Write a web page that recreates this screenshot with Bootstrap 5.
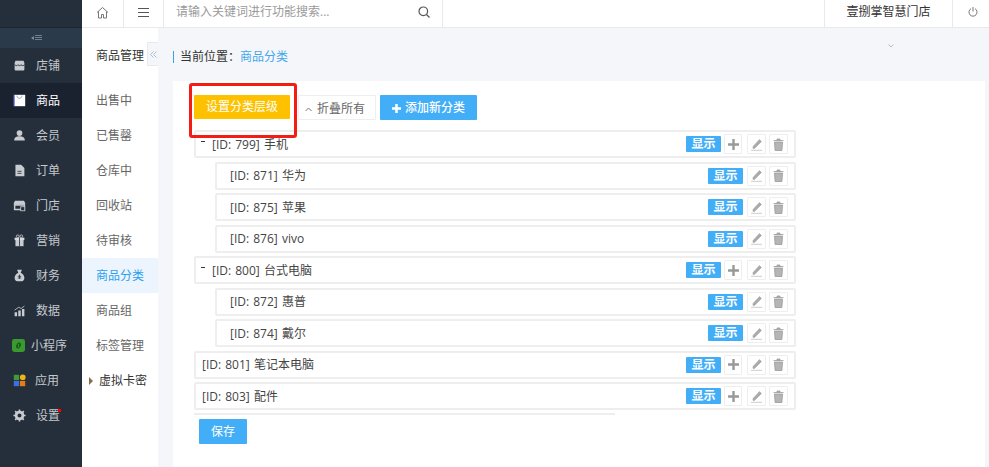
<!DOCTYPE html>
<html lang="zh">
<head>
<meta charset="utf-8">
<title>商品分类</title>
<link rel="stylesheet" href="https://cdn.jsdelivr.net/npm/bootstrap@5.3.0/dist/css/bootstrap.min.css">
<style>
html,body{height:467px;overflow:hidden}
body{font:12px/1.5 "Open Sans","Noto Sans CJK SC",sans-serif;color:#444;background:#f4f6f9}
.app{height:467px}
.fill{min-width:0;min-height:0}
.side{width:82px;background:#252f3b;color:#c2c6ca}
.side-top{height:28px;border-bottom:1px solid #1d2631}
.side-fold{height:20px;background:#2b3a4b;padding-right:9px}
.side-item{height:35px;padding-left:13px;gap:10px;color:#c4c8cc}
.side-item.now{background:#1a2230;color:#fff}
.side-item svg{width:13px;height:13px;flex:none}
.side-item.wide{padding-left:12px;gap:6px}
.side-item.apps{gap:9px}
.dot-red{width:3px;height:3px;background:#f00;margin:-10px 0 0 -12px}
.top{height:28px;background:#fff;border-bottom:1px solid #e8e9eb}
.cell{height:27px;border-right:1px solid #e8e9eb;color:#555;padding-bottom:3px}
.cell-home{width:42px}.cell-menu{width:40px}
.cell-search{width:279px;padding:0 12px 3px;color:#9a9a9a}
.cell-store{width:129px;border-left:1px solid #e8e9eb;color:#333}
.cell-power{width:36px;border-right:0;padding-left:4px}
.sub{width:76px;background:#fff}
.sub-title{height:55px;padding:14px 0 0 14px;color:#333;line-height:28px}
.sub-item{height:35px;padding-left:14px;color:#666}
.sub-item.now{background:#ecf5fe;color:#2d9ff0}
.sub-item.tree{padding-left:7px;gap:6px;color:#333}
.sub-item.tree span:last-child{padding-top:1px}
.tri{width:0;height:0;border-left:4px solid #8a6d4b;border-top:4px solid transparent;border-bottom:4px solid transparent}
.tab{width:11px;height:24px;top:14px;right:0;background:#f4f6f9;border:1px solid #e8e9eb;border-right:0}
.crumb{height:53px;padding:4px 0 0 15px;color:#333}
.crumb-text{border-left:1px solid #3a9fe6;padding-left:6px;line-height:12px}
.crumb-text a{color:#45a6ee;text-decoration:none}
.crumb-more{margin-right:95px;margin-top:10px;line-height:6px;align-self:flex-start}
.panel{background:#fff;margin:0 4px 0 15px;padding:14px 0 0 21px}
.tools{height:35px;gap:4px}
.b{height:25px;border-radius:1px;border:0;padding:0;font-size:12px;line-height:25px}
.b-set{width:96px;height:24px;line-height:24px;background:#fdc100;color:#fff}
.b-fold{width:78px;background:#fff;border:1px solid #eee;color:#666;margin-left:4px;padding-right:4px}
.b-fold svg{margin-right:5px}
.b-add{width:97px;background:#42aef8;color:#fff;font-weight:500}
.b-add svg{margin-right:4px}
.anno{position:relative;display:block}
.anno i{position:absolute;left:-5px;right:-7px;top:-12px;bottom:-8px;border:3px solid #f41c14;border-radius:3px}
.cat-list{width:602px;list-style:none;margin:0;padding:0}
.cat-list ol{list-style:none;margin:0;padding:0 0 0 21px}
.cat{height:28px;margin-bottom:3.5px;border:2px solid #eee;border-radius:2px;padding:0 6px;color:#444;background:#fff}
.nm{padding-top:1px;word-spacing:1px}
.tg{width:4px;height:1px;background:#333;margin:-6px 7px 0 -1px}
.ch{padding-left:7px}
.tag{width:35px;height:16px;background:#42aef8;color:#fff;border-radius:1px;font-size:12px;line-height:16px;font-weight:700;margin-right:1px}
.ic{width:19px;height:20px;border:1px solid #eee;border-radius:1px;margin-left:3px;background:#fff}
.ic svg{width:13px;height:13px}
.ic.plus{width:18px;margin:0 2px 0 2px}
.rule{width:421px;border-top:2px solid #eee;margin:-1px 0 4px 0}
.b-save{width:48px;height:25px;background:#42aef8;color:#fff;margin-left:5px}
</style>
</head>
<body>
<div class="app d-flex">
  <aside class="side flex-shrink-0">
    <div class="side-top"></div>
    <div class="side-fold d-flex align-items-center justify-content-center">
      <svg width="11" height="8" viewBox="0 0 11 8"><path d="M3 2L0 4l3 2z" fill="#7d8c9c"/><path d="M4 1.500h7M4 3.500h7M4 5.500h7" stroke="#6f7f90" stroke-width="1"/></svg>
    </div>
    <div class="side-item d-flex align-items-center"><svg viewBox="0 0 16 16"><path d="M3 2h10l1 3v8a1 1 0 0 1-1 1H3a1 1 0 0 1-1-1V5z" fill="#c8ccd0"/><path d="M2 7c2 1.500 3 1.500 4 0 1 1.500 3 1.500 4 0 1 1.500 3 1.500 4 0" fill="none" stroke="#252f3b" stroke-width="1.200"/></svg><span>店铺</span></div>
    <div class="side-item now d-flex align-items-center"><svg viewBox="0 0 16 16"><rect x="1" y="1" width="14" height="14" fill="#fff"/><path d="M5 2c0 4.500 6 4.500 6 0" fill="none" stroke="#8a93a0" stroke-width="1"/><path d="M1.500 1v14" stroke="#3b3fd0"/></svg><span>商品</span></div>
    <div class="side-item d-flex align-items-center"><svg viewBox="0 0 16 16"><circle cx="8" cy="5" r="3.500" fill="#c8ccd0"/><path d="M1.500 14c0-3.800 3-5 6.500-5s6.500 1.200 6.500 5z" fill="#c8ccd0"/></svg><span>会员</span></div>
    <div class="side-item d-flex align-items-center"><svg viewBox="0 0 16 16"><path d="M3 1h7l4 4v10H3z" fill="#c8ccd0"/><path d="M5.500 9h5M5.500 11.500h5" stroke="#252f3b" stroke-width="1"/></svg><span>订单</span></div>
    <div class="side-item d-flex align-items-center"><svg viewBox="0 0 16 16"><path d="M2.500 2h11l1.500 3v2H1V5z" fill="#c8ccd0"/><path d="M2 7.500h12V13H2z" fill="none" stroke="#c8ccd0" stroke-width="1.800"/><rect x="9.500" y="9.500" width="5" height="5" fill="#252f3b" stroke="#c8ccd0"/></svg><span>门店</span></div>
    <div class="side-item d-flex align-items-center"><svg viewBox="0 0 16 16"><path d="M3 6h10v9H3z" fill="#c8ccd0"/><path d="M2 4.500h12V7.500H2z" fill="#d8dadd"/><path d="M8 4.500V15" stroke="#252f3b"/><circle cx="5.800" cy="2.800" r="1.700" fill="none" stroke="#c8ccd0"/><circle cx="10.200" cy="2.800" r="1.700" fill="none" stroke="#c8ccd0"/></svg><span>营销</span></div>
    <div class="side-item d-flex align-items-center"><svg viewBox="0 0 16 16"><path d="M5 1h6L9.500 4.500c3 1.500 4.500 4 4.500 6.500 0 2-1.500 4-3 4H5c-1.500 0-3-2-3-4C2 8.500 3.500 6 6.500 4.500z" fill="#c8ccd0"/><path d="M8 7v5M6 9h4M6 11h4" stroke="#252f3b"/></svg><span>财务</span></div>
    <div class="side-item d-flex align-items-center"><svg viewBox="0 0 16 16"><path d="M2 10h3v5H2zM6.500 8h3v7h-3zM11 6h3v9h-3z" fill="#c8ccd0"/><path d="M2 7.500L7 4l3 1.500L14 2.500" fill="none" stroke="#c8ccd0" stroke-width="1"/></svg><span>数据</span></div>
    <div class="side-item wide d-flex align-items-center"><svg viewBox="0 0 16 16"><rect x="0" y="0" width="16" height="16" rx="3" fill="#3b9a2f"/><path d="M6.500 10.500V6.800a2 2 0 1 1 2 2M9.500 5.500v3.700a2 2 0 1 1-2-2" fill="none" stroke="#14451a" stroke-width="1.100"/></svg><span>小程序</span></div>
    <div class="side-item apps d-flex align-items-center"><svg viewBox="0 0 16 16"><rect x="1" y="1" width="6.500" height="6.500" fill="#3f9b35"/><circle cx="12" cy="4" r="3.500" fill="#eab516"/><rect x="1" y="8.500" width="6.500" height="6.500" fill="#3c6fe0"/><rect x="8.500" y="8.500" width="6.500" height="6.500" fill="#ec7a12"/></svg><span>应用</span></div>
    <div class="side-item d-flex align-items-center"><svg viewBox="0 0 16 16"><circle cx="8" cy="8" r="4.200" fill="none" stroke="#c8ccd0" stroke-width="3.400"/><path d="M8 .5v3M8 12.500v3M.5 8h3M12.500 8h3M2.700 2.700l2 2M11.300 11.300l2 2M13.300 2.700l-2 2M4.700 11.300l-2 2" stroke="#c8ccd0" stroke-width="2"/></svg><span>设置</span><span class="dot-red"></span></div>
  </aside>
  <div class="flex-grow-1 d-flex flex-column fill">
    <header class="top d-flex flex-shrink-0">
      <div class="cell cell-home d-flex align-items-center justify-content-center"><svg width="13" height="13" viewBox="0 0 13 13" fill="none" stroke="#777" stroke-width="1"><path d="M1 6.500L6.500 1.500 12 6.500M2.500 5.500V12h3V8.500h2V12h3V5.500"/></svg></div>
      <div class="cell cell-menu d-flex align-items-center justify-content-center"><svg width="11" height="9" viewBox="0 0 11 9" stroke="#555" stroke-width="1"><path d="M0 .5h11M0 4.500h11M0 8.500h11"/></svg></div>
      <div class="cell cell-search d-flex align-items-center justify-content-between"><span>请输入关键词进行功能搜索...</span><svg width="12" height="12" viewBox="0 0 12 12" fill="none" stroke="#555" stroke-width="1.200"><circle cx="5.300" cy="5.300" r="4.300"/><path d="M8.500 8.500L11.500 11.500"/></svg></div>
      <div class="flex-grow-1"></div>
      <div class="cell cell-store d-flex align-items-center justify-content-center">壹捌掌智慧门店</div>
      <div class="cell cell-power d-flex align-items-center justify-content-center"><svg width="10" height="10" viewBox="0 0 10 10" fill="none" stroke="#777" stroke-width="1"><path d="M3 1.700a4 4 0 1 0 4 0M5 0v4.500"/></svg></div>
    </header>
    <div class="d-flex flex-grow-1 fill">
      <nav class="sub flex-shrink-0 position-relative">
        <div class="sub-title">商品管理</div>
        <div class="sub-item d-flex align-items-center">出售中</div>
        <div class="sub-item d-flex align-items-center">已售罄</div>
        <div class="sub-item d-flex align-items-center">仓库中</div>
        <div class="sub-item d-flex align-items-center">回收站</div>
        <div class="sub-item d-flex align-items-center">待审核</div>
        <div class="sub-item now d-flex align-items-center">商品分类</div>
        <div class="sub-item d-flex align-items-center">商品组</div>
        <div class="sub-item d-flex align-items-center">标签管理</div>
        <div class="sub-item tree d-flex align-items-center"><span class="tri"></span><span>虚拟卡密</span></div>
        <div class="tab position-absolute d-flex align-items-center justify-content-center"><svg width="7" height="7" viewBox="0 0 7 7" fill="none" stroke="#a9c0d6" stroke-width="1"><path d="M3.500 .5L.5 3.500l3 3M6.500 .5l-3 3 3 3"/></svg></div>
      </nav>
      <main class="flex-grow-1 d-flex flex-column fill">
        <div class="crumb d-flex align-items-center flex-shrink-0">
          <div class="crumb-text">当前位置：<a href="#">商品分类</a></div>
          <div class="ms-auto crumb-more"><svg width="6" height="4" viewBox="0 0 6 4" fill="none" stroke="#bbb" stroke-width="1"><path d="M.5.500L3 3 5.500.5"/></svg></div>
        </div>
        <div class="panel flex-grow-1">
          <div class="tools d-flex">
            <span class="anno"><button class="b b-set d-block text-center">设置分类层级</button><i></i></span>
            <button class="b b-fold"><svg width="7" height="5" viewBox="0 0 7 5" fill="none" stroke="#777" stroke-width="1"><path d="M.5 4L3.500 1l3 3"/></svg>折叠所有</button>
            <button class="b b-add"><svg width="9" height="9" viewBox="0 0 10 10"><path d="M5 0v10M0 5h10" stroke="#fff" stroke-width="2.800"/></svg>添加新分类</button>
          </div>
          <ol class="cat-list">
            <li>
              <div class="cat d-flex align-items-center"><span class="tg"></span><span class="nm flex-grow-1">[ID: 799] 手机</span><span class="tag text-center">显示</span><span class="ic plus d-flex align-items-center justify-content-center"><svg viewBox="0 0 13 13"><path d="M6.500 1v11M1 6.500h11" stroke="#999" stroke-width="2.400"/></svg></span><span class="ic d-flex align-items-center justify-content-center"><svg viewBox="0 0 13 13"><path d="M9.500 1.500l2 2-7 7H3v-2zM1 12.300h11" fill="#aaa" stroke="#aaa" stroke-width=".6"/></svg></span><span class="ic d-flex align-items-center justify-content-center"><svg viewBox="0 0 13 13"><path d="M2.500 4h8l-.6 8.500H3.100zM1.500 2.500h10M5 2.500V1h3v1.500" fill="#b5b5b5" stroke="#999" stroke-width=".8"/></svg></span></div>
              <ol>
                <li><div class="cat d-flex align-items-center"><span class="ch nm flex-grow-1">[ID: 871] 华为</span><span class="tag text-center">显示</span><span class="ic d-flex align-items-center justify-content-center"><svg viewBox="0 0 13 13"><path d="M9.500 1.500l2 2-7 7H3v-2zM1 12.300h11" fill="#aaa" stroke="#aaa" stroke-width=".6"/></svg></span><span class="ic d-flex align-items-center justify-content-center"><svg viewBox="0 0 13 13"><path d="M2.500 4h8l-.6 8.500H3.100zM1.500 2.500h10M5 2.500V1h3v1.500" fill="#b5b5b5" stroke="#999" stroke-width=".8"/></svg></span></div></li>
                <li><div class="cat d-flex align-items-center"><span class="ch nm flex-grow-1">[ID: 875] 苹果</span><span class="tag text-center">显示</span><span class="ic d-flex align-items-center justify-content-center"><svg viewBox="0 0 13 13"><path d="M9.500 1.500l2 2-7 7H3v-2zM1 12.300h11" fill="#aaa" stroke="#aaa" stroke-width=".6"/></svg></span><span class="ic d-flex align-items-center justify-content-center"><svg viewBox="0 0 13 13"><path d="M2.500 4h8l-.6 8.500H3.100zM1.500 2.500h10M5 2.500V1h3v1.500" fill="#b5b5b5" stroke="#999" stroke-width=".8"/></svg></span></div></li>
                <li><div class="cat d-flex align-items-center"><span class="ch nm flex-grow-1">[ID: 876] vivo</span><span class="tag text-center">显示</span><span class="ic d-flex align-items-center justify-content-center"><svg viewBox="0 0 13 13"><path d="M9.500 1.500l2 2-7 7H3v-2zM1 12.300h11" fill="#aaa" stroke="#aaa" stroke-width=".6"/></svg></span><span class="ic d-flex align-items-center justify-content-center"><svg viewBox="0 0 13 13"><path d="M2.500 4h8l-.6 8.500H3.100zM1.500 2.500h10M5 2.500V1h3v1.500" fill="#b5b5b5" stroke="#999" stroke-width=".8"/></svg></span></div></li>
              </ol>
            </li>
            <li>
              <div class="cat d-flex align-items-center"><span class="tg"></span><span class="nm flex-grow-1">[ID: 800] 台式电脑</span><span class="tag text-center">显示</span><span class="ic plus d-flex align-items-center justify-content-center"><svg viewBox="0 0 13 13"><path d="M6.500 1v11M1 6.500h11" stroke="#999" stroke-width="2.400"/></svg></span><span class="ic d-flex align-items-center justify-content-center"><svg viewBox="0 0 13 13"><path d="M9.500 1.500l2 2-7 7H3v-2zM1 12.300h11" fill="#aaa" stroke="#aaa" stroke-width=".6"/></svg></span><span class="ic d-flex align-items-center justify-content-center"><svg viewBox="0 0 13 13"><path d="M2.500 4h8l-.6 8.500H3.100zM1.500 2.500h10M5 2.500V1h3v1.500" fill="#b5b5b5" stroke="#999" stroke-width=".8"/></svg></span></div>
              <ol>
                <li><div class="cat d-flex align-items-center"><span class="ch nm flex-grow-1">[ID: 872] 惠普</span><span class="tag text-center">显示</span><span class="ic d-flex align-items-center justify-content-center"><svg viewBox="0 0 13 13"><path d="M9.500 1.500l2 2-7 7H3v-2zM1 12.300h11" fill="#aaa" stroke="#aaa" stroke-width=".6"/></svg></span><span class="ic d-flex align-items-center justify-content-center"><svg viewBox="0 0 13 13"><path d="M2.500 4h8l-.6 8.500H3.100zM1.500 2.500h10M5 2.500V1h3v1.500" fill="#b5b5b5" stroke="#999" stroke-width=".8"/></svg></span></div></li>
                <li><div class="cat d-flex align-items-center"><span class="ch nm flex-grow-1">[ID: 874] 戴尔</span><span class="tag text-center">显示</span><span class="ic d-flex align-items-center justify-content-center"><svg viewBox="0 0 13 13"><path d="M9.500 1.500l2 2-7 7H3v-2zM1 12.300h11" fill="#aaa" stroke="#aaa" stroke-width=".6"/></svg></span><span class="ic d-flex align-items-center justify-content-center"><svg viewBox="0 0 13 13"><path d="M2.500 4h8l-.6 8.500H3.100zM1.500 2.500h10M5 2.500V1h3v1.500" fill="#b5b5b5" stroke="#999" stroke-width=".8"/></svg></span></div></li>
              </ol>
            </li>
            <li><div class="cat d-flex align-items-center"><span class="nm flex-grow-1">[ID: 801] 笔记本电脑</span><span class="tag text-center">显示</span><span class="ic plus d-flex align-items-center justify-content-center"><svg viewBox="0 0 13 13"><path d="M6.500 1v11M1 6.500h11" stroke="#999" stroke-width="2.400"/></svg></span><span class="ic d-flex align-items-center justify-content-center"><svg viewBox="0 0 13 13"><path d="M9.500 1.500l2 2-7 7H3v-2zM1 12.300h11" fill="#aaa" stroke="#aaa" stroke-width=".6"/></svg></span><span class="ic d-flex align-items-center justify-content-center"><svg viewBox="0 0 13 13"><path d="M2.500 4h8l-.6 8.500H3.100zM1.500 2.500h10M5 2.500V1h3v1.500" fill="#b5b5b5" stroke="#999" stroke-width=".8"/></svg></span></div></li>
            <li><div class="cat d-flex align-items-center"><span class="nm flex-grow-1">[ID: 803] 配件</span><span class="tag text-center">显示</span><span class="ic plus d-flex align-items-center justify-content-center"><svg viewBox="0 0 13 13"><path d="M6.500 1v11M1 6.500h11" stroke="#999" stroke-width="2.400"/></svg></span><span class="ic d-flex align-items-center justify-content-center"><svg viewBox="0 0 13 13"><path d="M9.500 1.500l2 2-7 7H3v-2zM1 12.300h11" fill="#aaa" stroke="#aaa" stroke-width=".6"/></svg></span><span class="ic d-flex align-items-center justify-content-center"><svg viewBox="0 0 13 13"><path d="M2.500 4h8l-.6 8.500H3.100zM1.500 2.500h10M5 2.500V1h3v1.500" fill="#b5b5b5" stroke="#999" stroke-width=".8"/></svg></span></div></li>
          </ol>
          <div class="rule"></div>
          <button class="b b-save">保存</button>
        </div>
      </main>
    </div>
  </div>
</div>
<script src="https://cdn.jsdelivr.net/npm/bootstrap@5.3.0/dist/js/bootstrap.bundle.min.js"></script>
</body>
</html>
